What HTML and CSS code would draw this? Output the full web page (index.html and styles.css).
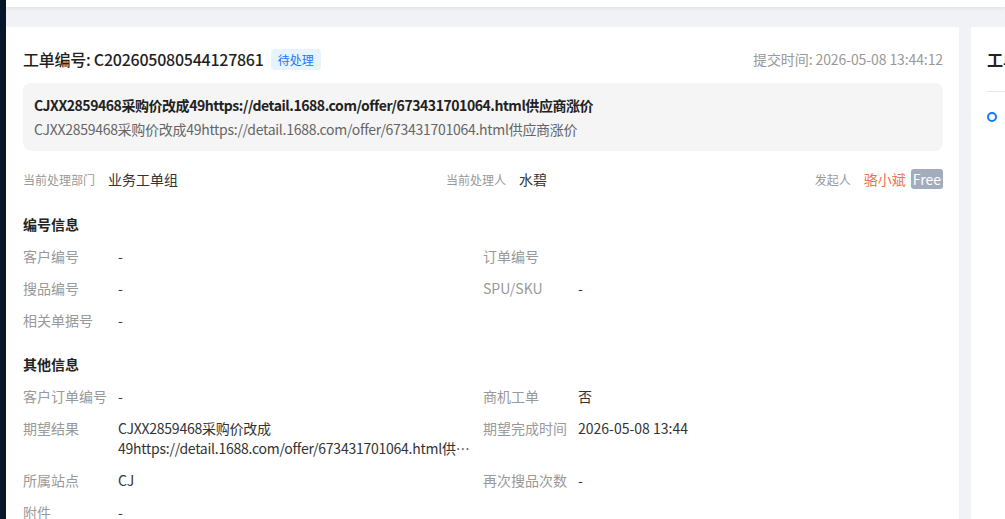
FILE: index.html
```html
<!DOCTYPE html>
<html lang="zh-CN">
<head>
<meta charset="utf-8">
<title>工单详情</title>
<link rel="stylesheet" href="styles.css">
</head>
<body>
  <aside class="sider"></aside>
  <div class="main">
    <header class="topbar"></header>
    <div class="layout">
      <section class="card">
        <div class="card-head">
          <h1 class="title">工单编号: C202605080544127861</h1>
          <span class="tag">待处理</span>
          <span class="submit-time">提交时间: 2026-05-08 13:44:12</span>
        </div>

        <div class="summary">
          <div class="summary-title">CJXX2859468采购价改成49https://detail.1688.com/offer/673431701064.html供应商涨价</div>
          <div class="summary-desc">CJXX2859468采购价改成49https://detail.1688.com/offer/673431701064.html供应商涨价</div>
        </div>

        <div class="meta">
          <div class="meta-item"><span class="meta-label">当前处理部门</span><span class="meta-value">业务工单组</span></div>
          <div class="meta-item"><span class="meta-label">当前处理人</span><span class="meta-value">水碧</span></div>
          <div class="meta-item"><span class="meta-label">发起人</span><span class="meta-value creator">骆小斌</span><span class="badge">Free</span></div>
        </div>

        <h2 class="section-title first">编号信息</h2>
        <div class="fields">
          <div class="field"><span class="label">客户编号</span><span class="value">-</span></div>
          <div class="field"><span class="label">订单编号</span><span class="value"></span></div>
          <div class="field"><span class="label">搜品编号</span><span class="value">-</span></div>
          <div class="field"><span class="label">SPU/SKU</span><span class="value">-</span></div>
          <div class="field"><span class="label">相关单据号</span><span class="value">-</span></div>
        </div>

        <h2 class="section-title">其他信息</h2>
        <div class="fields">
          <div class="field"><span class="label">客户订单编号</span><span class="value">-</span></div>
          <div class="field"><span class="label">商机工单</span><span class="value">否</span></div>
          <div class="field"><span class="label">期望结果</span><span class="value clamp">CJXX2859468采购价改成49https://detail.1688.com/offer/673431701064.html供应商涨价</span></div>
          <div class="field"><span class="label">期望完成时间</span><span class="value">2026-05-08 13:44</span></div>
          <div class="field"><span class="label">所属站点</span><span class="value">CJ</span></div>
          <div class="field"><span class="label">再次搜品次数</span><span class="value">-</span></div>
          <div class="field"><span class="label">附件</span><span class="value">-</span></div>
        </div>
      </section>

      <section class="side">
        <h2 class="side-title">工单进度</h2>
        <div class="side-body">
          <span class="dot"></span>
        </div>
      </section>
    </div>
  </div>
</body>
</html>
```

FILE: styles.css
```css
* {
  box-sizing: border-box;
}

html,
body {
  margin: 0;
  height: 100%;
  overflow: hidden;
}

body {
  display: flex;
  background: #f0f2f5;
  font-family: "Noto Sans CJK SC", "Noto Sans", sans-serif;
  font-size: 14px;
  color: #333;
}

.sider {
  flex: none;
  width: 6px;
  background: #071628;
}

.main {
  flex: 1;
  min-width: 0;
  display: flex;
  flex-direction: column;
}

.topbar {
  flex: none;
  height: 7px;
  background: #fff;
  box-shadow: 0 1px 4px rgba(0, 21, 41, 0.08);
  position: relative;
  z-index: 1;
}

.layout {
  flex: 1;
  display: flex;
  gap: 12px;
  padding-top: 20px;
  min-height: 0;
}

/* main ticket card */
.card {
  flex: none;
  width: 953px;
  background: #fff;
  padding: 21px 16px 0 17px;
}

.card-head {
  display: flex;
  align-items: center;
  height: 22px;
}

.title {
  margin: 0;
  font-size: 16px;
  font-weight: 500;
  line-height: 22px;
  color: #1f1f1f;
  letter-spacing: -0.25px;
}

.tag {
  margin-left: 7px;
  padding: 0 7px;
  height: 21px;
  line-height: 21px;
  font-size: 12px;
  color: #1677ff;
  background: #e6f4ff;
  border-radius: 4px;
}

.submit-time {
  margin-left: auto;
  color: #999;
  font-size: 14px;
  letter-spacing: -0.1px;
}

.summary {
  margin-top: 13px;
  padding: 10px 11px;
  background: #f5f5f5;
  border-radius: 8px;
  line-height: 24px;
  letter-spacing: -0.28px;
}

.summary-title {
  font-weight: 600;
  color: #222;
  letter-spacing: -0.45px;
}

.summary-desc {
  color: #666;
}

/* handler / creator row */
.meta {
  margin-top: 18px;
  height: 20px;
  display: flex;
  justify-content: space-between;
  align-items: center;
}

.meta-item {
  display: flex;
  align-items: center;
}

.meta-label {
  font-size: 12px;
  color: #999;
  margin-right: 13px;
}

.meta-value {
  font-size: 14px;
  color: #333;
}

.creator {
  color: #f2704f;
}

.badge {
  margin-left: 5px;
  padding: 0 2px;
  height: 20px;
  line-height: 20px;
  font-size: 14px;
  color: #fff;
  background: #a3acbd;
  border-radius: 3px;
}

/* field sections */
.section-title {
  margin: 22px 0 10px;
  font-size: 14px;
  font-weight: 600;
  line-height: 22px;
  color: #222;
}

.section-title.first {
  margin-top: 24px;
}

.fields {
  display: grid;
  grid-template-columns: 1fr 1fr;
  row-gap: 10px;
}

.field {
  display: flex;
  line-height: 22px;
  min-width: 0;
}

.label {
  flex: none;
  width: 95px;
  color: #999;
}

.value {
  flex: 1;
  min-width: 0;
  color: #333;
  padding-right: 8px;
}

.clamp {
  line-height: 20px;
  padding-top: 1px;
  padding-bottom: 1px;
  letter-spacing: -0.25px;
  display: -webkit-box;
  -webkit-box-orient: vertical;
  -webkit-line-clamp: 2;
  overflow: hidden;
}

/* progress side card */
.side {
  flex: 1;
  min-width: 0;
  background: #fff;
  padding: 21px 0 0 16px;
  overflow: hidden;
}

.side-title {
  margin: 0;
  font-size: 16px;
  font-weight: 600;
  line-height: 22px;
  color: #222;
  white-space: nowrap;
}

.side-body {
  margin-top: 21px;
  border-top: 1px solid #e8e8e8;
  padding-top: 20px;
}

.dot {
  display: block;
  width: 10px;
  height: 10px;
  border: 2px solid #1677ff;
  border-radius: 50%;
}
```
